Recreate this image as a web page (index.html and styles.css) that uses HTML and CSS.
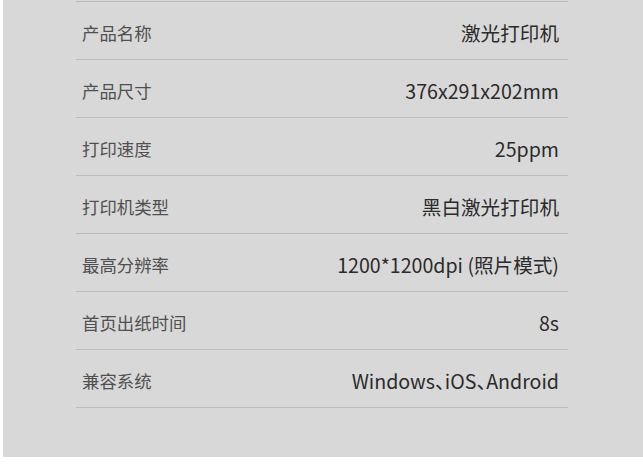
FILE: index.html
```html
<!DOCTYPE html>
<html lang="zh">
<head>
<meta charset="utf-8">
<link rel="stylesheet" href="styles.css">
</head>
<body>
<div class="panel">
  <ul class="specs">
    <li class="row"><span class="label">产品名称</span><span class="value">激光打印机</span></li>
    <li class="row"><span class="label">产品尺寸</span><span class="value">376x291x202mm</span></li>
    <li class="row"><span class="label">打印速度</span><span class="value">25ppm</span></li>
    <li class="row"><span class="label">打印机类型</span><span class="value">黑白激光打印机</span></li>
    <li class="row"><span class="label">最高分辨率</span><span class="value">1200*1200dpi (照片模式)</span></li>
    <li class="row"><span class="label">首页出纸时间</span><span class="value">8s</span></li>
    <li class="row"><span class="label">兼容系统</span><span class="value">Windows、iOS、Android</span></li>
  </ul>
</div>
</body>
</html>
```
FILE: styles.css
```css
html, body {
  margin: 0;
  padding: 0;
  background: #ffffff;
}
body {
  font-family: "Noto Sans CJK SC", "Noto Sans", sans-serif;
}
.panel {
  margin-left: 3px;
  height: 457px;
  background: #d8d8d8;
  padding-top: 1px;
  box-sizing: border-box;
}
.specs {
  list-style: none;
  margin: 0 0 0 73px;
  padding: 0;
  width: 492px;
}
.row {
  display: flex;
  justify-content: space-between;
  align-items: center;
  border-top: 1px solid #bcbcbc;
  padding: 3px 9px 0 6px;
  height: 54px;
}
.row:last-child {
  border-bottom: 1px solid #bcbcbc;
}
.label {
  font-size: 17.4px;
  color: #505050;
}
.value {
  font-size: 19.6px;
  color: #2b2b2b;
  font-feature-settings: "halt" 1;
}
```
